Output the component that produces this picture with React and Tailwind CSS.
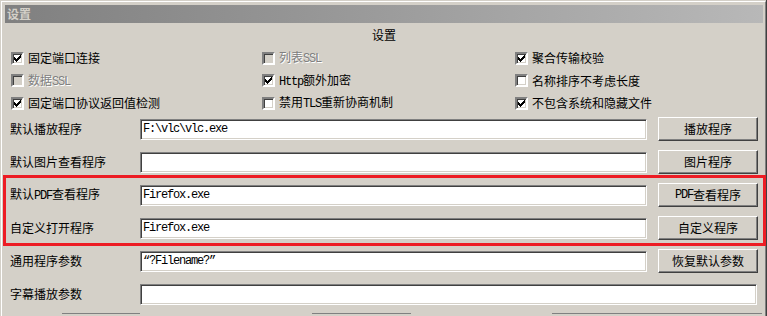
import React from 'react';

const cjk = { fontFamily: '"Noto Sans CJK SC", "Liberation Sans", sans-serif' };

function M({ children }) {
  return <span className="font-['Liberation_Mono',monospace] text-[12px] tracking-[-1.2px]">{children}</span>;
}

function Tick() {
  const cols = [2, 3, 4, 3, 2, 1, 0];
  return (
    <svg width="13" height="13" viewBox="0 0 13 13" shapeRendering="crispEdges" className="absolute -left-[2px] -top-[2px]">
      {cols.map((y, i) => <rect key={i} x={3 + i} y={3 + y} width="1" height="3" fill="#000" />)}
    </svg>
  );
}

function Check({ checked, disabled, children }) {
  return (
    <div className="flex items-center gap-[4px] h-[22.5px]">
      <div className={`relative w-[13px] h-[13px] border-2 border-t-[#808080] border-l-[#808080] border-b-white border-r-white shadow-[inset_1px_1px_0_#404040,inset_-1px_-1px_0_#d4d0c8] ${disabled ? 'bg-[#d4d0c8]' : 'bg-white'}`}>
        {checked && <Tick />}
      </div>
      <span className={`text-[12px] leading-none ${disabled ? 'text-[#808080] [text-shadow:1px_1px_0_#fff]' : 'text-black'}`}>{children}</span>
    </div>
  );
}

function Field({ value, wide }) {
  return (
    <div className={`h-[21px] ${wide ? 'flex-1 mr-[1px]' : 'w-[507px]'} bg-white border border-t-[#808080] border-l-[#808080] border-b-white border-r-white shadow-[inset_1px_1px_0_#404040,inset_-1px_-1px_0_#d4d0c8] flex items-center pl-[2px] text-black`}>
      {value && <M>{value}</M>}
    </div>
  );
}

function Btn({ children }) {
  return (
    <div className="w-[100px] h-[24px] flex items-center justify-center bg-[#d4d0c8] border border-t-white border-l-white border-b-[#404040] border-r-[#404040] shadow-[inset_-1px_-1px_0_#808080] text-[12px] text-black">
      {children}
    </div>
  );
}

function Row({ label, value, button, wide }) {
  return (
    <div className="flex items-center h-[24px]">
      <div className="w-[130px] text-[12px] text-black">{label}</div>
      <Field value={value} wide={wide} />
      {!wide && <div className="ml-[11px]"><Btn>{button}</Btn></div>}
    </div>
  );
}

export default function App() {
  return (
    <div style={cjk} className="relative w-[767px] h-[316px] overflow-hidden bg-[#d4d0c8] pt-[1px] pl-[1px] border-r border-r-[#404040]">
      <div className="h-full border-t border-l border-white border-r border-r-[#808080] pt-[3px] pl-[3px] pr-[2px]">
        <div className="h-[18px] bg-gradient-to-r from-[#808080] to-[#b8b8b8] flex items-center pl-[2px]">
          <span className="text-[12px] font-bold text-[#d4d0c8] leading-none">设置</span>
        </div>
        <div className="px-[5px]">
          <div className="h-[24px] flex items-center justify-center text-[12px] text-black">设置</div>
          <div className="grid grid-cols-[251px_253px_1fr] pl-[1px]">
            <Check checked>固定端口连接</Check>
            <Check disabled>列表<M>SSL</M></Check>
            <Check checked>聚合传输校验</Check>
            <Check disabled>数据<M>SSL</M></Check>
            <Check checked><M>Http</M>额外加密</Check>
            <Check>名称排序不考虑长度</Check>
            <Check checked>固定端口协议返回值检测</Check>
            <Check>禁用<M>TLS</M>重新协商机制</Check>
            <Check checked>不包含系统和隐藏文件</Check>
          </div>
          <div className="mt-[2.5px] flex flex-col gap-[9px]">
            <Row label="默认播放程序" value="F:\vlc\vlc.exe" button="播放程序" />
            <Row label="默认图片查看程序" button="图片程序" />
            <Row label={<>默认<M>PDF</M>查看程序</>} value="Firefox.exe" button={<><M>PDF</M>查看程序</>} />
            <Row label="自定义打开程序" value="Firefox.exe" button="自定义程序" />
            <Row label="通用程序参数" value="“?Filename?”" button="恢复默认参数" />
            <Row label="字幕播放参数" wide />
          </div>
          <div className="mt-[7px] relative h-[4px]">
            <div className="absolute left-[52px] w-[78px] top-0 h-[1px] bg-[#808080]" />
            <div className="absolute left-[302px] w-[99px] top-0 h-[1px] bg-[#808080]" />
            <div className="absolute left-[542px] w-[210px] top-0 h-[1px] bg-[#808080]" />
          </div>
        </div>
      </div>
      <div className="absolute left-[3px] top-[175px] w-[763px] h-[71px] border-[3px] border-[#ed1c24]" />
    </div>
  );
}
